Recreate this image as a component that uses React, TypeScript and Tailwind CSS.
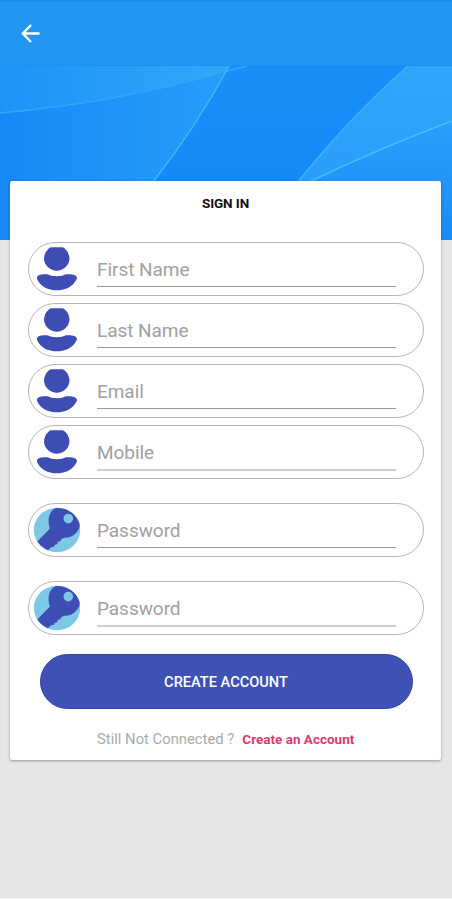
import { clsx } from "clsx";

type IconType = "user" | "key";

interface FieldProps {
  label: string;
  icon: IconType;
  type?: string;
  className?: string;
  lineClassName?: string;
}

const UserIcon = () => (
  <svg width="42" height="44" viewBox="0 0 42 44" fill="#3d4db3">
    <path d="M13 1.2Q14 .3 15.500 .3H26Q27.500 .3 28.500 1.200Q33.500 5.500 33.500 12A12.800 12.800 0 0 1 8 12Q8 5.500 13 1.200Z" />
    <path d="M7 27.300H11.500Q15 29.300 20.800 29.300T30 27.300H34.500Q41 27.800 41 31.400C37.500 39.500 29.500 43.200 20.800 43.200S4 39.500 .8 31.400Q.8 27.800 7 27.300Z" />
  </svg>
);

const KeyIcon = () => (
  <svg width="48" height="46" viewBox="0 0 48 46">
    <ellipse cx="24" cy="23" rx="23.2" ry="22.3" fill="#7ec8e7" />
    <path
      fill="#3d4db3"
      d="M23 1C32 .2 43 5.500 46.500 16.500C47.300 20.500 45 24 42.500 26.500C39 30 35.500 31 31.500 30.800L28.500 32L27 34.500L24.500 34.800L24.500 37L21.500 38L21 40L18.500 40L15 43.200C10.500 41.500 6.500 38 4.300 34.500L17 21.500C14 14 15.500 4 23 1Z"
    />
    <circle cx="35.300" cy="11.600" r="4.800" fill="#7ec8e7" />
  </svg>
);

const Field = ({ label, icon, type = "text", className, lineClassName }: FieldProps) => {
  return (
    <div
      className={clsx(
        "flex h-[54px] items-center rounded-full border border-[#b5b5b5] bg-white pr-[27px]",
        icon === "user" ? "pl-[7px]" : "pl-1",
        className
      )}
    >
      <span
        className={clsx(
          "flex shrink-0",
          icon === "user" ? "mr-[19px] w-[42px]" : "mr-4 w-12"
        )}
      >
        {icon === "user" ? <UserIcon /> : <KeyIcon />}
      </span>
      <input
        type={type}
        placeholder={label}
        aria-label={label}
        className={clsx(
          "min-w-0 flex-1 text-[19px] tracking-[-0.05px] outline-none placeholder:text-[#a0a0a0]",
          lineClassName ?? "mt-[2px] h-[34px] border-b border-[#989898]"
        )}
      />
    </div>
  );
};

const Banner = () => (
  <svg className="block h-[174px] w-full shrink-0" viewBox="0 0 452 174" preserveAspectRatio="none">
    <defs>
      <linearGradient id="base" x1="0" y1="0" x2="1" y2="0">
        <stop offset="0" stopColor="#1789f7" />
        <stop offset="0.45" stopColor="#259bfa" />
      </linearGradient>
      <linearGradient id="top" x1="0" y1="0" x2="1" y2="0">
        <stop offset="0" stopColor="#1b94f9" />
        <stop offset="1" stopColor="#34a7f8" />
      </linearGradient>
      <linearGradient id="middle" x1="0" y1="0" x2="0" y2="1">
        <stop offset="0" stopColor="#1690f8" />
        <stop offset="1" stopColor="#1486f7" />
      </linearGradient>
      <linearGradient id="right" x1="0" y1="0" x2="0" y2="1">
        <stop offset="0" stopColor="#31a5fa" />
        <stop offset="1" stopColor="#2b9dfa" />
      </linearGradient>
      <linearGradient id="corner" x1="0" y1="0" x2="0" y2="1">
        <stop offset="0" stopColor="#2b9ffa" />
        <stop offset="1" stopColor="#188cf8" />
      </linearGradient>
    </defs>
    <path d="M0 0H452V174H0Z" fill="url(#base)" />
    <path d="M0 0H229L224 6Q115 37 0 47Z" fill="url(#top)" />
    <path d="M229 0H408Q350 51 297 117L270 174H120L153 116Q197 60 229 0Z" fill="url(#middle)" />
    <path d="M408 0H452V55Q380 82 309 116H297Q350 51 408 0Z" fill="url(#right)" />
    <path d="M452 55Q380 82 309 116V174H452Z" fill="url(#corner)" />
    <g fill="none" strokeWidth="1.500">
      <path d="M0 47Q115 37 224 6L247 0" stroke="#31a6fb" />
      <path d="M229 0Q197 60 153 116" stroke="#3bbafa" />
      <path d="M408 0Q350 51 297 117" stroke="#3bb4fa" />
      <path d="M452 55Q380 82 309 116" stroke="#42c0fa" />
    </g>
  </svg>
);

const App = () => {
  return (
    <div className="flex h-[900px] w-[452px] flex-col overflow-hidden border-b-2 border-[#fafafa] bg-[#e6e6e6] font-['Roboto',sans-serif]">
      <header className="flex h-[66px] shrink-0 items-center border-t-2 border-b border-t-[#1e88e5] border-b-[#1c8eed] bg-[#2196f3] pl-[21px]">
        <button aria-label="Back">
          <svg width="19" height="19" viewBox="0 0 19 19" fill="none" stroke="#fff" strokeWidth="2.400">
            <path d="M18.500 9.500H2M10 1L1.800 9.500L10 18" />
          </svg>
        </button>
      </header>
      <Banner />
      <main className="relative -mt-[59px] ml-[10px] flex h-[579px] w-[431px] shrink-0 flex-col rounded-[2px] bg-white pr-[17px] pl-[18px] shadow-[0_1px_3px_rgba(0,0,0,0.35)]">
        <h1 className="mt-[13px] pr-[1px] text-center text-[13.500px] leading-[18px] font-bold tracking-[-0.1px] text-[#111]">
          SIGN IN
        </h1>
        <form className="mt-[30px] flex flex-col">
          <Field label="First Name" icon="user" />
          <Field label="Last Name" icon="user" className="mt-[7px]" />
          <Field label="Email" icon="user" className="mt-[7px]" />
          <Field
            label="Mobile"
            icon="user"
            className="mt-[7px]"
            lineClassName="mt-[3px] h-[35px] border-b-2 border-[#cfcfcf]"
          />
          <Field label="Password" icon="key" type="password" className="mt-6" />
          <Field
            label="Password"
            icon="key"
            type="password"
            className="mt-6"
            lineClassName="mt-[3px] h-[35px] border-b-2 border-[#cfcfcf]"
          />
          <button
            type="button"
            className="mr-[11px] ml-3 mt-[19px] h-[55px] rounded-full border border-[#3142a8] bg-[#3f51b5] pt-[3px] pr-[1px] text-[14.600px] font-medium text-white"
          >
            CREATE ACCOUNT
          </button>
        </form>
        <p className="mt-5 flex items-center pl-[69px] text-[14.800px] leading-[20px] whitespace-nowrap text-[#aaa]">
          Still Not Connected ?
          <a className="ml-2 text-[13.500px] font-bold text-[#d83a76]">Create an Account</a>
        </p>
      </main>
    </div>
  );
};

export default App;
